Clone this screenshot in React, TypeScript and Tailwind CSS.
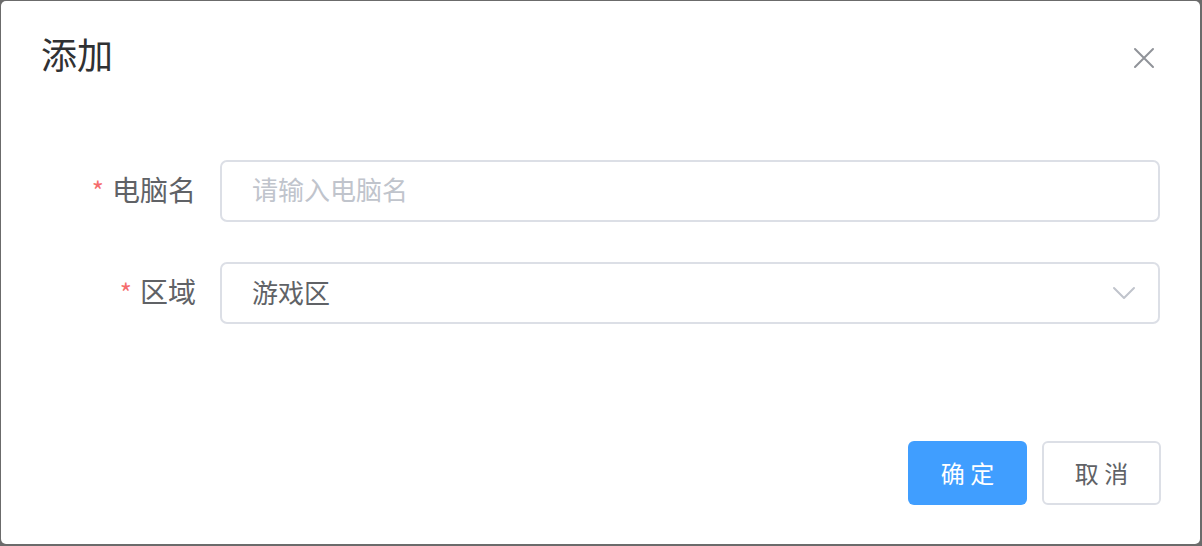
import React, { useState } from 'react';

const font = { fontFamily: '"Noto Sans CJK SC", "Noto Sans", sans-serif' };

function CloseIcon() {
    return (
        <svg width="22" height="22" viewBox="0 0 22 22" fill="none">
            <path d="M2 2L20 20M20 2L2 20" stroke="#909399" strokeWidth="2" strokeLinecap="round" />
        </svg>
    );
}

function ChevronDown() {
    return (
        <svg width="24" height="14" viewBox="0 0 24 14" fill="none">
            <path d="M2 2L12 12L22 2" stroke="#c0c4cc" strokeWidth="2" strokeLinecap="round" strokeLinejoin="round" />
        </svg>
    );
}

export default function App() {
    const [pcName, setPcName] = useState('');
    const [zone] = useState('游戏区');

    return (
        <div className="w-[1202px] h-[546px] bg-[#6b6b6b] pt-px pl-px pr-[2px] pb-[2px]" style={font}>
            <div className="h-full bg-white rounded-[5px] flex flex-col">
                {/* Header */}
                <div className="flex items-start justify-between pl-[40px] pr-[45px] pt-[34px]">
                    <span className="text-[36px] leading-[36px] text-[#303133]">添加</span>
                    <button className="w-[22px] h-[22px] mt-[12px] flex items-center justify-center">
                        <CloseIcon />
                    </button>
                </div>

                {/* Form */}
                <div className="flex flex-col gap-[40px] pt-[89px] pr-[40px]">
                    <div className="flex items-center">
                        <label className="w-[219px] pr-[24px] text-right text-[28px] leading-[40px] text-[#606266] -mt-[3px]">
                            <span className="text-[#f56c6c] mr-[8px] text-[26px]">*</span>电脑名
                        </label>
                        <input
                            type="text"
                            placeholder="请输入电脑名"
                            value={pcName}
                            onChange={(e) => setPcName(e.target.value)}
                            className="flex-1 h-[62px] px-[30px] pb-[5px] border-2 border-[#dcdfe6] rounded-[7px] text-[26px] text-[#606266] placeholder:text-[#c0c4cc] outline-none"
                        />
                    </div>
                    <div className="flex items-center">
                        <label className="w-[219px] pr-[24px] text-right text-[28px] leading-[40px] text-[#606266] -mt-[3px]">
                            <span className="text-[#f56c6c] mr-[8px] text-[26px]">*</span>区域
                        </label>
                        <div className="flex-1 h-[62px] pl-[30px] pr-[22px] border-2 border-[#dcdfe6] rounded-[7px] flex items-center justify-between">
                            <span className="text-[26px] text-[#606266] -mt-[4px]">{zone}</span>
                            <ChevronDown />
                        </div>
                    </div>
                </div>

                {/* Footer */}
                <div className="mt-auto flex justify-end gap-[15px] pr-[39px] pb-[39px]">
                    <button className="w-[119px] h-[64px] bg-[#409eff] rounded-[6px] text-white text-[24px]">
                        确 定
                    </button>
                    <button className="w-[119px] h-[64px] bg-white border-2 border-[#dcdfe6] rounded-[6px] text-[#606266] text-[24px]">
                        取 消
                    </button>
                </div>
            </div>
        </div>
    );
}
